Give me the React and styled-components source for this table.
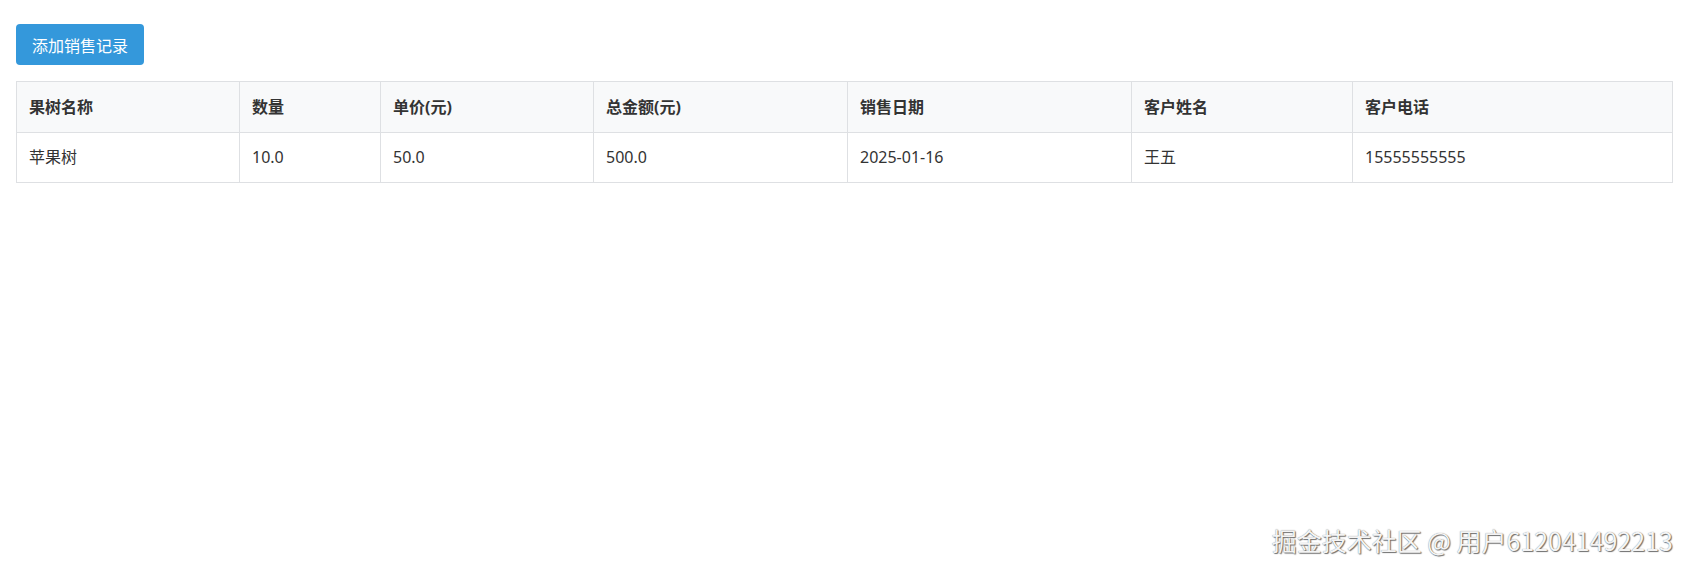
import React from 'react';
import styled, { createGlobalStyle } from 'styled-components';

const GlobalStyle = createGlobalStyle`
    body {
        margin: 0;
        background: #fff;
        font-family: "Noto Sans", "Noto Sans CJK SC", sans-serif;
        color: #333;
    }
`

const columns = [
    { key: 'name', title: '果树名称', width: 223 },
    { key: 'qty', title: '数量', width: 141 },
    { key: 'price', title: '单价(元)', width: 213 },
    { key: 'total', title: '总金额(元)', width: 254 },
    { key: 'date', title: '销售日期', width: 284 },
    { key: 'customer', title: '客户姓名', width: 221 },
    { key: 'phone', title: '客户电话', width: 320 },
];

const records = [
    { id: 1, name: '苹果树', qty: '10.0', price: '50.0', total: '500.0', date: '2025-01-16', customer: '王五', phone: '15555555555' },
];

function App() {
    return (
        <Page>
            <GlobalStyle />
            <AddButton>添加销售记录</AddButton>
            <Table>
                <colgroup>
                    {columns.map(col => <col key={col.key} width={col.width} />)}
                </colgroup>
                <thead>
                    <tr>
                        {columns.map(col => <Th key={col.key}>{col.title}</Th>)}
                    </tr>
                </thead>
                <tbody>
                    {records.map(r => (
                        <tr key={r.id}>
                            {columns.map(col => <Td key={col.key}>{r[col.key]}</Td>)}
                        </tr>
                    ))}
                </tbody>
            </Table>
            <Watermark>掘金技术社区 @ 用户612041492213</Watermark>
        </Page>
    )
}

export default App

const Page = styled.main`
    position: relative;
    min-height: 572px;
    box-sizing: border-box;
    padding: 24px 19px 0 16px;
`

const AddButton = styled.button`
    display: block;
    height: 41px;
    padding: 0 16px;
    background-color: #3498db;
    color: #fff;
    border: none;
    border-radius: 4px;
    font-family: "Noto Sans CJK SC", sans-serif;
    font-size: 16px;
    cursor: pointer;
`

const Table = styled.table`
    margin-top: 16px;
    width: 1656px;
    table-layout: fixed;
    border-collapse: collapse;
    font-size: 16px;
`

const Th = styled.th`
    background: #f8f9fa;
    border: 1px solid #dee0e3;
    padding: 12px 12px;
    line-height: 26px;
    text-align: left;
    font-weight: bold;
    color: #333;
`

const Td = styled.td`
    border: 1px solid #dee0e3;
    padding: 12px 12px;
    line-height: 25px;
    color: #333;
`

const Watermark = styled.div`
    position: absolute;
    right: 18px;
    bottom: 14px;
    font-family: "Noto Sans CJK SC", sans-serif;
    font-size: 25px;
    color: #f4f4f4;
    text-shadow: 1px 1px 1px rgba(0, 0, 0, 0.55), 0 0 1px rgba(0, 0, 0, 0.5);
    pointer-events: none;
`
